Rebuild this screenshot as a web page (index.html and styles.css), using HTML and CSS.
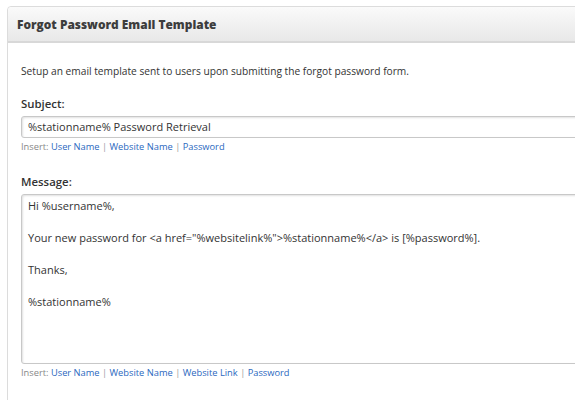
FILE: index.html
```html
<!DOCTYPE html>
<html>
<head>
<meta charset="utf-8">
<link rel="stylesheet" href="styles.css">
</head>
<body>
<div class="panel">
  <div class="panel-head">Forgot Password Email Template</div>
  <div class="panel-body">
    <p class="desc">Setup an email template sent to users upon submitting the forgot password form.</p>
    <div class="field">
      <label class="label">Subject:</label>
      <div class="input">%stationname% Password Retrieval</div>
      <div class="insert">Insert: <a>User Name</a> <span class="sep">|</span> <a>Website Name</a> <span class="sep">|</span> <a>Password</a></div>
    </div>
    <div class="field">
      <label class="label">Message:</label>
      <div class="textarea">
        <div>Hi %username%,</div>
        <div class="blank"></div>
        <div>Your new password for &lt;a href="%websitelink%"&gt;%stationname%&lt;/a&gt; is [%password%].</div>
        <div class="blank"></div>
        <div>Thanks,</div>
        <div class="blank"></div>
        <div>%stationname%</div>
      </div>
      <div class="insert">Insert: <a>User Name</a> <span class="sep">|</span> <a>Website Name</a> <span class="sep">|</span> <a>Website Link</a> <span class="sep">|</span> <a>Password</a></div>
    </div>
  </div>
</div>
</body>
</html>
```
FILE: styles.css
```css
html, body {
  margin: 0;
  padding: 0;
  background: #fff;
  overflow: hidden;
}
body {
  padding: 6px 0 0 7px;
  font-family: "Open Sans", "Liberation Sans", sans-serif;
  color: #333;
}
.panel {
  width: 620px;
  height: 420px;
  border: 1px solid #dcdcdc;
  border-radius: 4px 0 0 0;
}
.panel-head {
  height: 36px;
  box-sizing: border-box;
  padding: 0 0 0 9px;
  display: flex;
  align-items: center;
  font-size: 11.9px;
  font-weight: 800;
  color: #3d3d3d;
  background: linear-gradient(#fafafa, #e8e8e8);
  border-bottom: 2px solid #d8d8d8;
  border-radius: 4px 0 0 0;
}
.panel-body {
  padding: 20px 0 0 13px;
}
.desc {
  margin: 0;
  font-size: 10.2px;
  line-height: 16px;
  color: #333;
}
.field {
  margin-top: 17px;
}
.field + .field {
  margin-top: 20px;
}
.label {
  display: block;
  font-size: 11.4px;
  font-weight: 600;
  color: #333;
  line-height: 16px;
  margin-bottom: 4px;
}
.input, .textarea {
  border: 1px solid #c8c8c8;
  border-radius: 3px 0 0 3px;
  box-shadow: inset 1px 1px 2px rgba(0,0,0,0.12);
  font-size: 11px;
  color: #333;
  padding: 0 0 0 6px;
  box-sizing: border-box;
}
.input {
  height: 22px;
  line-height: 20px;
}
.textarea {
  height: 170px;
  padding-top: 3px;
  line-height: 16px;
}
.blank {
  height: 16px;
}
.insert {
  margin-top: 2px;
  font-size: 9.3px;
  line-height: 14px;
  color: #888;
}
.insert a {
  color: #2a68c0;
}
.sep {
  color: #999;
}
```
